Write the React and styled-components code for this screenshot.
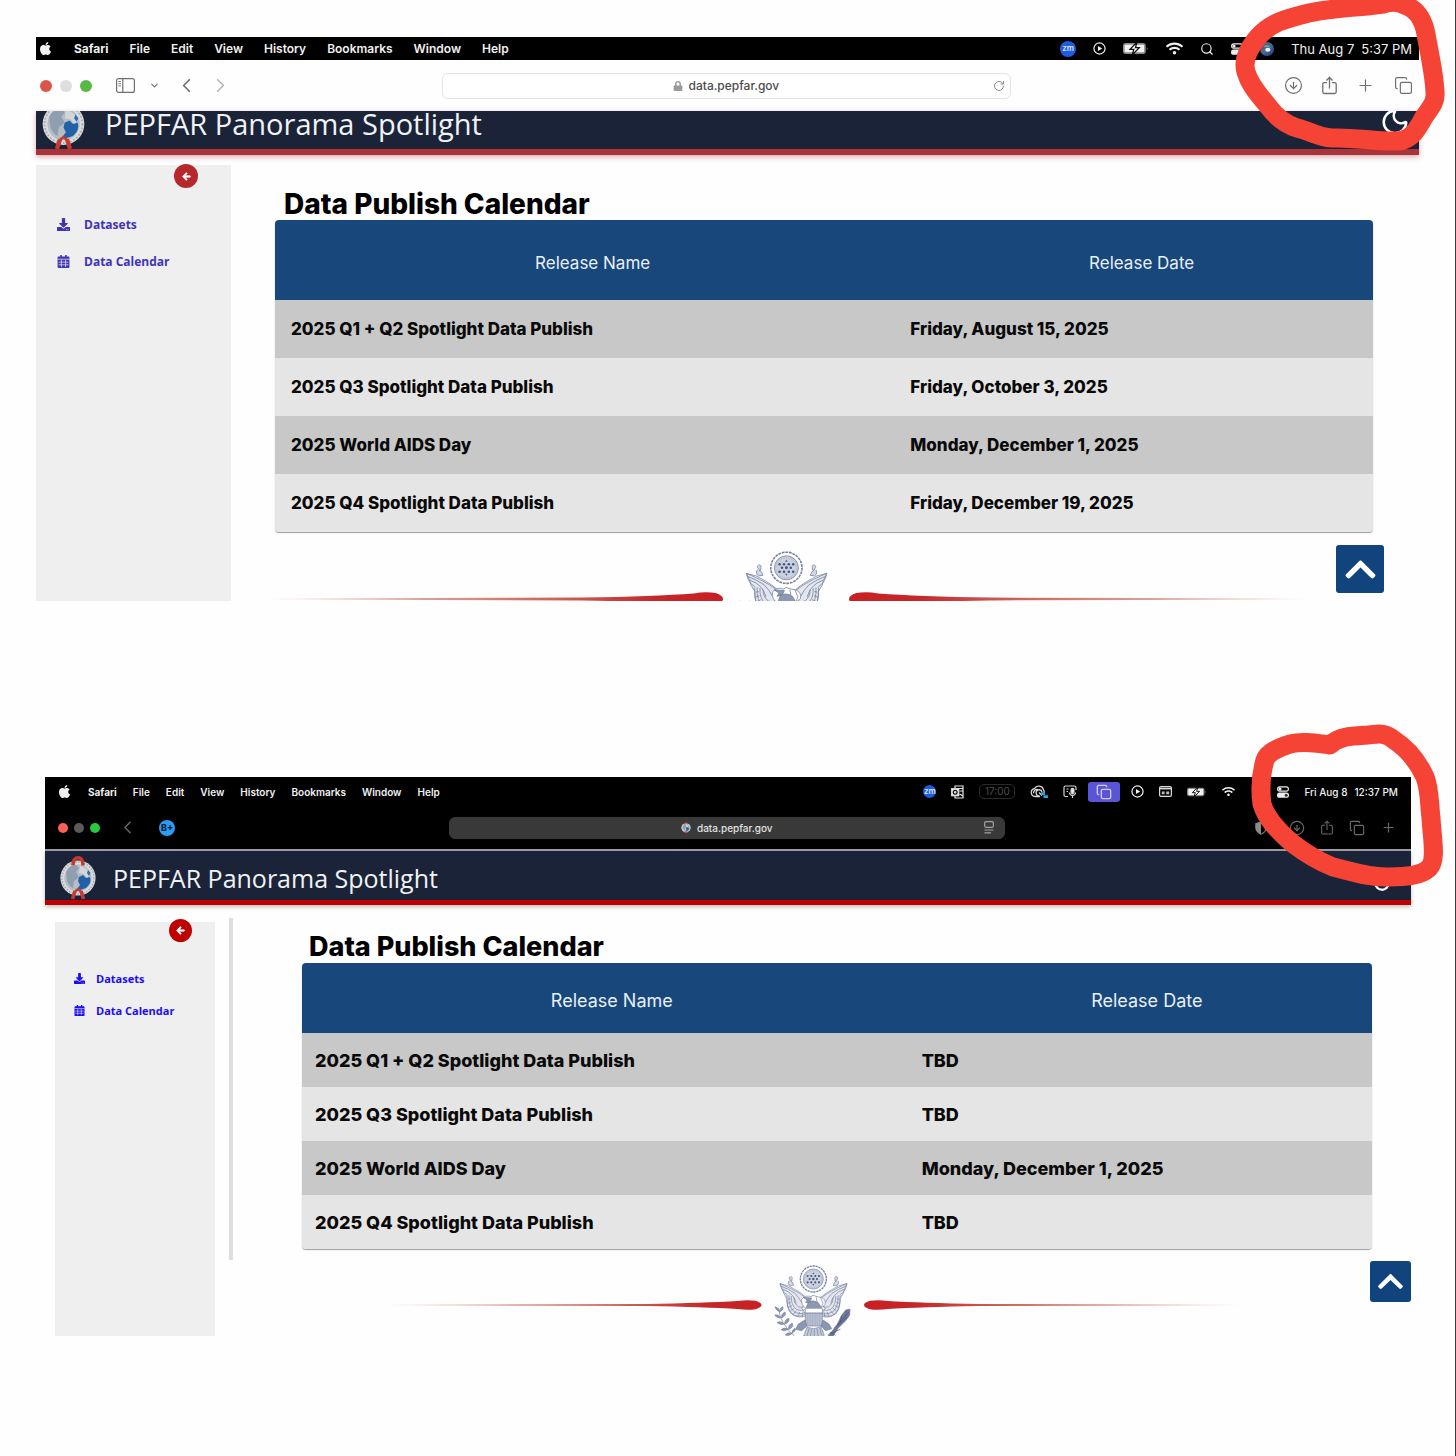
import React from "react";
import styled, { createGlobalStyle, css, ThemeProvider } from "styled-components";
import { FaApple, FaArrowLeft, FaChevronUp, FaDownload, FaLock, FaWifi } from "react-icons/fa";
import { ChevronDown, ChevronLeft, ChevronRight, CircleArrowDown, Copy, Moon, Plus, RotateCw, Search } from "lucide-react";

const menus = ["File", "Edit", "View", "History", "Bookmarks", "Window", "Help"];

const thursday = {
  menuHeight: 23,
  menuPadding: "0 7px 0 2px",
  menuFont: 12,
  clockFont: 13,
  clockWeight: 400,
  menuGap: 21,
  statusGap: 17,
  toolbarHeight: 51,
  toolbarBg: "#fefefe",
  toolbarLine: "none",
  toolbarPadding: "0 6px 0 4px",
  toolGap: 19,
  toolColor: "#6f6f6f",
  dot: 12,
  dotGap: 8,
  dots: ["#dd5548", "#dedede", "#58b944"],
  urlHeight: 26,
  urlBg: "#ffffff",
  urlBorder: "#e3e3e3",
  urlColor: "#4c4c4c",
  urlFont: 12,
  urlWidth: 92,
  actionRight: 5,
  bannerHeight: 38,
  bannerPadding: "0 9px 0 5px",
  bannerFont: 29,
  bannerGap: 19,
  bannerLine: "6px solid #a83338",
  bannerShadow: "0 2px 5px rgba(168, 51, 56, 0.4)",
  moonBottom: 12,
  sideWidth: 195,
  sideMargin: "10px 0 0 0",
  sidePadding: "41px 0 0 21px",
  sideFont: 12,
  sideGap: 14,
  sideRow: 37,
  sideColor: "#4034b6",
  collapse: 24,
  collapseRight: 33,
  collapseTop: -1,
  collapseBg: "#b5282c",
  contentPadding: "33px 46px 0 44px",
  titleFont: 28,
  titleIndent: 9,
  headHeight: 80,
  rowHeight: 58,
  nameColumn: "56.4%",
  cellIndent: 16,
  cellFont: 17,
  footerPadding: "0 112px 0 34px",
  footerTop: 19,
  footerHeight: 50,
  eagleGap: 15,
  lineHeight: 14,
  topSize: 48,
  topRight: 35,
  topBottom: 8,
};

const friday = {
  menuHeight: 29,
  menuPadding: "0 13px 0 12px",
  menuFont: 10,
  clockFont: 10,
  clockWeight: 500,
  menuGap: 16,
  statusGap: 15,
  toolbarHeight: 45,
  toolbarBg: "#000000",
  toolbarLine: "2px solid #9d9fa5",
  toolbarPadding: "0 15px 0 13px",
  toolGap: 16,
  toolColor: "#6a6a6a",
  dot: 10,
  dotGap: 6,
  dots: ["#fe5f57", "#5b5b5b", "#28c840"],
  urlHeight: 22,
  urlBg: "#393939",
  urlBorder: "#393939",
  urlColor: "#e2e2e2",
  urlFont: 10,
  urlWidth: 76,
  actionRight: 10,
  bannerHeight: 49,
  bannerPadding: "6px 20px 0 14px",
  bannerFont: 25,
  bannerGap: 16,
  bannerLine: "5px solid #bf0000",
  bannerShadow: "0 2px 4px rgba(0, 0, 0, 0.25)",
  moonBottom: 8,
  sideWidth: 160,
  sideMargin: "17px 0 0 10px",
  sidePadding: "40px 0 0 19px",
  sideFont: 11,
  sideGap: 11,
  sideRow: 32,
  sideColor: "#1a0df5",
  collapse: 23,
  collapseRight: 23,
  collapseTop: -3,
  collapseBg: "#bf0000",
  contentPadding: "26px 39px 0 69px",
  titleFont: 27,
  titleIndent: 7,
  headHeight: 70,
  rowHeight: 54,
  nameColumn: "56.7%",
  cellIndent: 13,
  cellFont: 18,
  footerPadding: "0 172px 0 153px",
  footerTop: 16,
  footerHeight: 71,
  eagleGap: 11,
  lineHeight: 10,
  topSize: 41,
  topRight: 0,
  topBottom: 34,
};

const thursdayReleases = [
  { name: "2025 Q1 + Q2 Spotlight Data Publish", date: "Friday, August 15, 2025" },
  { name: "2025 Q3 Spotlight Data Publish", date: "Friday, October 3, 2025" },
  { name: "2025 World AIDS Day", date: "Monday, December 1, 2025" },
  { name: "2025 Q4 Spotlight Data Publish", date: "Friday, December 19, 2025" },
];

const fridayReleases = [
  { name: "2025 Q1 + Q2 Spotlight Data Publish", date: "TBD" },
  { name: "2025 Q3 Spotlight Data Publish", date: "TBD" },
  { name: "2025 World AIDS Day", date: "Monday, December 1, 2025" },
  { name: "2025 Q4 Spotlight Data Publish", date: "TBD" },
];

const Battery = ({ width }) => (
  <svg width={width} height={width / 2} viewBox="0 0 24 12">
    <rect x="0" y="1" width="21" height="10" rx="2.5" fill="#8d8d8d" />
    <rect x="1.5" y="2.5" width="18" height="7" rx="1" fill="#f2f2f2" />
    <path d="M22 4.5 Q23.6 6 22 7.5 Z" fill="#8d8d8d" />
    <path d="M13 0 L6.5 6.8 H10 L8.5 12 L15 5.2 H11.5 Z" fill="#fff" stroke="#111" strokeWidth="1.2" />
  </svg>
);

const PlayCircle = ({ size }) => (
  <svg width={size} height={size} viewBox="0 0 14 14">
    <circle cx="7" cy="7" r="6" fill="none" stroke="#f0f0f0" strokeWidth="1.3" />
    <path d="M5.3 4.2 L10 7 L5.3 9.8 Z" fill="#f0f0f0" />
  </svg>
);

const ControlCenter = ({ size }) => (
  <svg width={size} height={size} viewBox="0 0 12 12">
    <rect x="0.6" y="0.9" width="10.8" height="4.2" rx="2.1" fill="none" stroke="#ededed" strokeWidth="1.1" />
    <circle cx="3" cy="3" r="1.6" fill="#ededed" />
    <rect x="0" y="6.6" width="12" height="5.2" rx="2.6" fill="#ededed" />
    <circle cx="9.2" cy="9.2" r="1.5" fill="#333" />
  </svg>
);

const Siri = () => (
  <svg width="14" height="14" viewBox="0 0 14 14">
    <defs>
      <linearGradient id="siri" x1="0" y1="0" x2="1" y2="1">
        <stop offset="0" stopColor="#a0385f" />
        <stop offset="0.5" stopColor="#3f6f93" />
        <stop offset="1" stopColor="#2b2f8a" />
      </linearGradient>
    </defs>
    <circle cx="7" cy="7" r="7" fill="url(#siri)" />
    <path d="M3 5 Q7 1 11 6 Q8 4 3 5 Z" fill="#4fc0a0" />
    <ellipse cx="7.8" cy="7.8" rx="2.6" ry="2" fill="#f3f6ff" />
  </svg>
);

const Outlook = () => (
  <svg width="13" height="14" viewBox="0 0 13 14" fill="none" stroke="#e6e6e6" strokeWidth="1.2">
    <path d="M4 3.5 V1 H12 V13 H4 V11" />
    <path d="M7 3.5 H12 M8.5 6 H12 M8.5 9 L12 11" />
    <rect x="0.7" y="3.7" width="7" height="7" fill="#e6e6e6" />
    <circle cx="4.2" cy="7.2" r="1.9" stroke="#111" />
  </svg>
);

const CreativeCloud = () => (
  <svg width="18" height="13" viewBox="0 0 18 13" fill="none" stroke="#d6d6d6" strokeWidth="1.3">
    <path d="M5 11.5 A4 4 0 0 1 4.4 3.6 A5 5 0 0 1 13.6 5 A3.4 3.4 0 0 1 14 8" />
    <path d="M5 11.5 H10 M12 7 A3 3 0 1 0 9.5 10.8 M9 7.5 L12 10.5 M8 4.6 A3.4 3.4 0 0 0 3.6 8.4" />
    <path d="M11 8.6 H15 M13.4 11.6 H18" stroke="#25a5dc" strokeWidth="2.6" />
  </svg>
);

const MicTile = () => (
  <svg width="14" height="14" viewBox="0 0 14 14" fill="none" stroke="#d6d6d6" strokeWidth="1.2">
    <path d="M5 11.5 H2.6 Q1 11.5 1 10 V2.5 Q1 1 2.6 1 H11.4 Q13 1 13 2.5 V5" />
    <path d="M3.5 4 H5.5 M3.5 6.5 H5" />
    <rect x="8" y="3.4" width="3" height="5.2" rx="1.5" fill="#e8e8e8" />
    <path d="M6.4 7.5 Q6.8 10.4 9.5 10.4 Q12.2 10.4 12.6 7.5 M9.5 10.4 V13" />
  </svg>
);

const WindowTile = () => (
  <svg width="13" height="11" viewBox="0 0 13 11">
    <rect x="0.6" y="0.6" width="11.8" height="9.8" rx="1.4" fill="none" stroke="#dcdcdc" strokeWidth="1.2" />
    <path d="M1 2.6 H12" stroke="#dcdcdc" strokeWidth="1.6" />
    <path d="M2.8 5.4 H5.6 V8.2 H2.8 Z M7.2 5.4 H10.2 V8.2 H7.2 Z" fill="#bdbdbd" />
  </svg>
);

const SidebarIcon = () => (
  <svg width="19" height="15" viewBox="0 0 19 15" fill="none" stroke="#707070">
    <rect x="0.6" y="0.6" width="17.8" height="13.8" rx="2" strokeWidth="1.2" />
    <path d="M6.8 1 V14" strokeWidth="1.2" />
    <path d="M2.4 3.5 H5 M2.4 5.7 H5 M2.4 7.9 H5" strokeWidth="0.9" />
  </svg>
);

const ShareIcon = ({ width, height }) => (
  <svg width={width} height={height} viewBox="0 0 15 18" fill="none" stroke="currentColor" strokeWidth="1.3">
    <path d="M5 6.2 H2.2 Q0.8 6.2 0.8 7.6 V15.6 Q0.8 17 2.2 17 H12.8 Q14.2 17 14.2 15.6 V7.6 Q14.2 6.2 12.8 6.2 H10" />
    <path d="M7.5 12 V1 M4.4 4 L7.5 1 L10.6 4" />
  </svg>
);

const ShieldIcon = () => (
  <svg width="18" height="14" viewBox="0 0 18 14">
    <path d="M6 0.8 L11.2 2.6 V7 Q11 11 6 13.2 Q1 11 0.8 7 V2.6 Z" fill="none" stroke="#777" strokeWidth="1.2" />
    <path d="M6 0.8 V13.2 Q1 11 0.8 7 V2.6 Z" fill="#8a8a8a" />
  </svg>
);

const ReaderIcon = () => (
  <svg width="10" height="13" viewBox="0 0 10 13" fill="none" stroke="#a2a2a2" strokeWidth="1.2">
    <rect x="0.7" y="0.7" width="8.6" height="5.6" rx="1.2" />
    <path d="M0.5 9 H9.5 M0.5 11.8 H7" />
  </svg>
);

const CalendarIcon = ({ size }) => (
  <svg width={size} height={size} viewBox="0 0 13 13">
    <path d="M3.2 0 H4.8 V1.6 H8.2 V0 H9.8 V1.6 H11.4 Q12.4 1.6 12.4 2.6 V12 Q12.4 13 11.4 13 H1.6 Q0.6 13 0.6 12 V2.6 Q0.6 1.6 1.6 1.6 H3.2 Z" fill="currentColor" />
    <path d="M0.6 4.2 H12.4 M1.6 7.2 H11.4 M1.6 9.8 H11.4 M4.4 4.6 V12 M8.6 4.6 V12" stroke="#efefef" strokeWidth="0.7" />
  </svg>
);

const Globe = ({ size }) => (
  <svg width={size} height={(size * 44) / 38} viewBox="0 0 38 44">
    <circle cx="19" cy="22" r="17.6" fill="#d9dadb" />
    <circle cx="19" cy="22" r="16" fill="none" stroke="#a4a7ad" strokeWidth="1.4" strokeDasharray="1.4 1.6" />
    <circle cx="19" cy="22" r="13.6" fill="#b4bcc6" />
    <path d="M14 9.5 Q14 1.8 19 1.8 Q24 1.8 24 9.5" fill="none" stroke="#c63a30" strokeWidth="3.6" />
    <path d="M7 16 Q10 9 17 9 L20 12 L17 16 L20 21 L15 25 L14 32 Q10 30 8 25 Z" fill="#8f9fb1" />
    <path d="M21 10 Q29 12 31 19 L28 22 L25 18 L20 17 Z" fill="#d3d6d9" />
    <path d="M20 21 L24 19 L27 22 L31 21 Q33 27 27 32 L21 34 L18 33 L21 29 L19 25 Z" fill="#2161a6" />
    <path d="M29 14 L31.5 17 L30 20 L28 17 Z" fill="#2e6fae" />
    <path d="M16 35 L13.5 43 M22 35 L24.5 43" stroke="#c63a30" strokeWidth="3.6" />
    <path d="M16 36 Q19 31 22 36" fill="none" stroke="#c63a30" strokeWidth="2.4" />
  </svg>
);

const Feathers = () => (
  <g>
    <path d="M181 131 Q190 134 214 146 Q240 158 262 176 L264 190 L246 204 L258 222 Q236 236 216 222 Q202 210 202 176 Q190 160 188 146 Z" fill="#e3e6ee" />
    <path d="M181 131 Q206 134 232 152 Q248 162 262 174 M185 139 Q206 146 226 160 Q238 172 246 188 M190 148 Q208 154 218 166 Q226 176 230 190" />
    <path d="M181 131 Q186 156 202 164 M202 166 Q198 204 218 222 Q236 236 258 228" />
    <path d="M208 166 Q206 200 224 216 Q240 226 258 218 M215 168 Q213 194 230 208 Q242 214 256 209 M223 172 Q222 190 236 200 Q244 204 254 200" />
    <path d="M205 178 L212 176 M204 190 L213 187 M206 202 L217 197 M212 213 L223 205 M221 223 L230 212 M235 229 L240 216 M248 231 L249 218" />
    <path d="M208 122 Q203 133 212 137 L222 136 Q220 127 214 123 M209 116 A4.5 4.5 0 1 1 217 117 Q219 124 214 124 Z" fill="#d3d7e2" />
  </g>
);

const Eagle = ({ size }) => (
  <svg width={size} height={size} viewBox="160 75 240 240" fill="none" stroke="#76819d" strokeWidth="2" strokeLinejoin="round">
    <Feathers />
    <g transform="translate(563 0) scale(-1 1)">
      <Feathers />
    </g>
    <circle cx="281" cy="117" r="39" fill="#fff" strokeWidth="4" strokeDasharray="7 2" />
    <circle cx="281" cy="117" r="30" fill="#cbd1df" />
    <circle cx="281" cy="117" r="26" stroke="#aeb6c9" strokeWidth="5" strokeDasharray="1.5 3" />
    <g fill="#46557f" stroke="none">
      <path d="M281 97 l3 5 h-6 Z M281 137 l3 -5 h-6 Z" />
      <circle cx="264" cy="108" r="3.2" /><circle cx="275" cy="108" r="3.2" />
      <circle cx="287" cy="108" r="3.2" /><circle cx="298" cy="108" r="3.2" />
      <circle cx="270" cy="117" r="3.2" /><circle cx="281" cy="117" r="3.6" /><circle cx="292" cy="117" r="3.2" />
      <circle cx="264" cy="127" r="3.2" /><circle cx="275" cy="127" r="3.2" />
      <circle cx="287" cy="127" r="3.2" /><circle cx="298" cy="127" r="3.2" />
    </g>
    <path d="M246 178 Q256 164 274 170 L280 166 L292 170 L304 172 Q320 178 316 194 L304 204 H258 Q244 196 246 178 Z" fill="#fff" />
    <path d="M250 172 L276 174 L270 186 L258 188 L262 180 Z M266 186 Q280 178 296 188 L304 202 H260 Z" fill="#8d98b3" />
    <path d="M302 172 L310 190 L304 202 M290 172 L292 186" />
    <path d="M257 205 H308 V219 H257 Z" fill="#fff" />
    <path d="M257 220 H308 V258 H257 Z" fill="#b9c1d1" />
    <path d="M264 222 V256 M271 222 V257 M278 222 V258 M286 222 V258 M293 222 V257 M300 222 V256" stroke="#9fa9be" />
    <path d="M256 240 L236 252 L228 268 L246 272 L262 258 Z M310 240 L328 252 L336 266 L318 272 L304 258 Z" fill="#8b96b2" />
    <path d="M262 262 L252 288 L268 292 H300 L314 286 L304 260 L283 266 Z" fill="#c2c9d8" />
    <path d="M268 266 L262 288 M276 268 L272 290 M284 268 V290 M292 266 L296 290 M300 264 L306 286" />
    <path d="M176 202 Q180 250 226 290" />
    <g fill="#8f9ab6">
      <path d="M178 214 q-10 -4 -12 -14 q10 2 12 14 Z M179 216 q2 -14 10 -16 q4 10 -10 16 Z" />
      <path d="M184 234 q-14 0 -19 -9 q12 -3 19 9 Z M185 234 q0 -14 11 -18 q5 11 -11 18 Z" />
      <path d="M194 252 q-14 4 -22 -5 q12 -6 22 5 Z M195 252 q0 -14 13 -17 q3 12 -13 17 Z" />
      <path d="M206 268 q-12 8 -22 1 q9 -9 22 -1 Z M207 268 q-2 -14 11 -18 q5 12 -11 18 Z" />
      <path d="M218 280 q-10 10 -21 5 q7 -10 21 -5 Z M218 279 q-2 -10 8 -14 q5 8 -8 14 Z" />
    </g>
    <path d="M326 288 L352 254 L366 226 L378 210 L391 207 L390 226 L378 242 L356 264 L338 292 Z" fill="#6b7898" />
    <path d="M352 256 L388 216 M344 264 L382 232 M366 226 L362 246 M330 276 L348 286 M324 284 L362 268" stroke="#46557f" />
  </svg>
);

const Rule = ({ id, flip }) => (
  <RuleSvg viewBox="0 0 376 10" preserveAspectRatio="none">
    <defs>
      <linearGradient id={id} x1="0" x2="1">
        <stop offset="0" stopColor="#c9604a" stopOpacity="0" />
        <stop offset="0.35" stopColor="#c4604c" stopOpacity="0.6" />
        <stop offset="0.85" stopColor="#c4282a" />
        <stop offset="1" stopColor="#c81f24" />
      </linearGradient>
    </defs>
    <path
      transform={flip ? "translate(376 0) scale(-1 1)" : undefined}
      d="M0 4.6 L260 4 Q320 3 352 1 Q362 -0.4 370 0.8 Q376 2.6 376 5 Q376 7.4 370 9.2 Q362 10.4 352 9 Q320 7 260 6 L0 5.4 Z"
      fill={`url(#${id})`}
    />
  </RuleSvg>
);

const MenuBar = ({ children, clock }) => (
  <MenuBarRow>
    <MenuGroup>
      <FaApple size={15} />
      <MenuButton $strong>Safari</MenuButton>
      {menus.map((name) => (
        <MenuButton key={name}>{name}</MenuButton>
      ))}
    </MenuGroup>
    <StatusGroup>
      {children}
      <Clock>
        <span>{clock[0]}</span>
        <span>{clock[1]}</span>
      </Clock>
    </StatusGroup>
  </MenuBarRow>
);

const Dots = ({ colors }) => (
  <DotGroup>
    {colors.map((color) => (
      <Dot key={color} $color={color} />
    ))}
  </DotGroup>
);

const Site = ({ id, releases, railed, sizes }) => (
  <>
    <Banner>
      <BannerInner>
        <Brand href="#home">
          <Globe size={sizes.logo} />
          PEPFAR Panorama Spotlight
        </Brand>
        <MoonButton aria-label="Dark mode">
          <Moon size={sizes.moon} strokeWidth={sizes.moonStroke} color="#fff" />
        </MoonButton>
      </BannerInner>
    </Banner>
    <Body>
      <Sidebar>
        <Collapse aria-label="Collapse menu">
          <FaArrowLeft size={9} />
        </Collapse>
        <SideLink href="#datasets">
          <FaDownload size={sizes.icon} />
          Datasets
        </SideLink>
        <SideLink href="#calendar">
          <CalendarIcon size={sizes.icon} />
          Data Calendar
        </SideLink>
      </Sidebar>
      {railed && <Rail />}
      <Main>
        <Content>
          <Title>Data Publish Calendar</Title>
          <Table>
            <thead>
              <tr>
                <Head $name>Release Name</Head>
                <Head>Release Date</Head>
              </tr>
            </thead>
            <tbody>
              {releases.map((release) => (
                <Row key={release.name}>
                  <Cell>{release.name}</Cell>
                  <Cell>{release.date}</Cell>
                </Row>
              ))}
            </tbody>
          </Table>
        </Content>
        <Footer>
          <Emblem>
            <Rule id={`${id}-left`} />
            <Eagle size={sizes.eagle} />
            <Rule id={`${id}-right`} flip />
          </Emblem>
        </Footer>
      </Main>
    </Body>
    <ToTop aria-label="Back to top">
      <FaChevronUp size={sizes.chevron} />
    </ToTop>
  </>
);

const App = () => {
  return (
    <Page>
      <GlobalStyle />
      <ThemeProvider theme={thursday}>
        <Shot>
          <MenuBar clock={["Thu Aug 7", "5:37 PM"]}>
            <ZoomBadge $size={16}>zm</ZoomBadge>
            <PlayCircle size={13} />
            <Battery width={26} />
            <FaWifi size={17} />
            <Search size={14} />
            <ControlCenter size={12} />
            <Siri />
          </MenuBar>
          <Toolbar>
            <ToolGroup>
              <Dots colors={thursday.dots} />
              <ToolCluster $space={24}>
                <IconButton aria-label="Sidebar"><SidebarIcon /></IconButton>
              </ToolCluster>
              <ToolCluster $space={14}>
                <IconButton aria-label="Tab groups"><ChevronDown size={11} strokeWidth={2.6} /></IconButton>
              </ToolCluster>
              <ToolCluster $space={15}>
                <IconButton aria-label="Back"><ChevronLeft size={23} strokeWidth={1.8} /></IconButton>
              </ToolCluster>
              <ToolCluster $space={11}>
                <IconButton aria-label="Forward"><ChevronRight size={23} strokeWidth={1.6} color="#b5b5b5" /></IconButton>
              </ToolCluster>
            </ToolGroup>
            <Address>
              <FaLock size={10} color="#9b9b9b" />
              <AddressInput aria-label="Address" defaultValue="data.pepfar.gov" />
              <AddressAction aria-label="Reload"><RotateCw size={12} color="#8b8b8b" /></AddressAction>
            </Address>
            <ToolGroup $end>
              <IconButton aria-label="Downloads"><CircleArrowDown size={19} strokeWidth={1.5} /></IconButton>
              <IconButton aria-label="Share"><ShareIcon width={15} height={19} /></IconButton>
              <IconButton aria-label="New tab"><Plus size={19} strokeWidth={1.5} /></IconButton>
              <IconButton aria-label="Tabs"><Copy size={19} strokeWidth={1.5} /></IconButton>
            </ToolGroup>
          </Toolbar>
          <Site
            id="thu"
            releases={thursdayReleases}
            sizes={{ logo: 45, moon: 30, moonStroke: 2, icon: 13, eagle: 96, chevron: 35 }}
          />
          <Scribble $top={-37} $right={-37} width="226" height="160" viewBox="1230 0 226 160">
            <path
              strokeWidth="19"
              d="M1383 4 C1355 8 1328 8 1305 14 C1285 19 1270 23 1258 37 C1247 50 1243 62 1246 72 C1250 86 1260 96 1268 106 C1276 117 1285 124 1297 128 C1310 131 1318 137 1332 138 C1356 137 1376 142 1398 141 C1412 140 1418 128 1424 117 C1431 107 1436 102 1435 92 C1434 72 1429 52 1426 34 C1423 18 1416 8 1402 4 C1396 1 1390 2 1383 4 Z"
            />
          </Scribble>
        </Shot>
      </ThemeProvider>
      <ThemeProvider theme={friday}>
        <Shot $inset>
          <MenuBar clock={["Fri Aug 8", "12:37 PM"]}>
            <ZoomBadge $size={13}>zm</ZoomBadge>
            <Outlook />
            <TimerPill>17:00</TimerPill>
            <CreativeCloud />
            <MicTile />
            <MirrorTile aria-label="Screen mirroring">
              <Copy size={16} strokeWidth={2} />
            </MirrorTile>
            <PlayCircle size={13} />
            <WindowTile />
            <Battery width={20} />
            <FaWifi size={13} />
            <MenuSlot />
            <ControlCenter size={12} />
          </MenuBar>
          <Toolbar>
            <ToolGroup>
              <Dots colors={friday.dots} />
              <ToolCluster $space={17}>
                <IconButton aria-label="Back"><ChevronLeft size={21} strokeWidth={1.7} /></IconButton>
              </ToolCluster>
              <ToolCluster $space={21}>
                <ProfileBadge>B+</ProfileBadge>
              </ToolCluster>
            </ToolGroup>
            <Address>
              <Globe size={10} />
              <AddressInput aria-label="Address" defaultValue="data.pepfar.gov" />
              <AddressAction aria-label="Reader"><ReaderIcon /></AddressAction>
            </Address>
            <ToolGroup $end>
              <IconButton aria-label="Privacy report"><ShieldIcon /></IconButton>
              <IconButton aria-label="Downloads"><CircleArrowDown size={16} strokeWidth={1.7} /></IconButton>
              <IconButton aria-label="Share"><ShareIcon width={12} height={15} /></IconButton>
              <IconButton aria-label="Tabs"><Copy size={16} strokeWidth={1.7} /></IconButton>
              <IconButton aria-label="New tab"><Plus size={15} strokeWidth={1.8} /></IconButton>
            </ToolGroup>
          </Toolbar>
          <Site
            id="fri"
            railed
            releases={fridayReleases}
            sizes={{ logo: 38, moon: 18, moonStroke: 3, icon: 11, eagle: 80, chevron: 29 }}
          />
          <Scribble $top={-62} $right={-45} width="216" height="190" viewBox="1240 715 216 190">
            <path
              strokeWidth="19"
              d="M1330 745 C1314 743 1302 741 1290 744 C1278 748 1268 752 1265 760 C1261 774 1260 790 1262 804 C1266 818 1277 830 1292 843 C1305 853 1318 861 1333 867 C1350 871 1370 878 1389 877 C1405 877 1421 876 1429 868 C1437 860 1432 838 1431 818 C1429 802 1430 790 1425 777 C1418 762 1408 749 1394 740 C1385 732 1378 734 1368 735 C1352 736 1340 736 1330 745 Z"
            />
          </Scribble>
        </Shot>
      </ThemeProvider>
    </Page>
  );
};

const GlobalStyle = createGlobalStyle`
  * {
    box-sizing: border-box;
  }
  body {
    margin: 0;
    background: #fefefe;
    font-family: Inter, "Liberation Sans", sans-serif;
  }
  button {
    border: 0;
    padding: 0;
    background: none;
    color: inherit;
    font: inherit;
  }
  svg {
    display: block;
    flex-shrink: 0;
  }
`;

const Page = styled.main`
  display: flex;
  flex-direction: column;
  gap: 176px;
  min-height: 100vh;
  padding: 37px 36px 119px;
  border-right: 1px solid #3c3c3c;
  overflow: hidden;
`;

const Shot = styled.section`
  position: relative;
  margin: ${({ $inset }) => ($inset ? "0 8px 0 9px" : "0")};
`;

const MenuBarRow = styled.div`
  display: flex;
  align-items: center;
  justify-content: space-between;
  height: ${({ theme }) => theme.menuHeight}px;
  padding: ${({ theme }) => theme.menuPadding};
  background: #000;
  color: #f0f0f0;
  font-size: ${({ theme }) => theme.menuFont}px;
`;

const MenuGroup = styled.nav`
  display: flex;
  align-items: center;
  gap: ${({ theme }) => theme.menuGap}px;
`;

const MenuButton = styled.button`
  font-weight: ${({ $strong }) => ($strong ? 700 : 600)};
`;

const StatusGroup = styled.div`
  display: flex;
  align-items: center;
  gap: ${({ theme }) => theme.statusGap}px;
`;

const Clock = styled.time`
  display: flex;
  gap: 7px;
  font-size: ${({ theme }) => theme.clockFont}px;
  font-weight: ${({ theme }) => theme.clockWeight};
  white-space: nowrap;
`;

const ZoomBadge = styled.span`
  width: ${({ $size }) => $size}px;
  height: ${({ $size }) => $size}px;
  border-radius: 50%;
  background: #1f5be0;
  color: #dfe8ff;
  font-size: 8px;
  font-weight: 600;
  line-height: ${({ $size }) => $size - 1}px;
  text-align: center;
`;

const TimerPill = styled.span`
  width: 36px;
  border: 1px solid #2b2b2b;
  border-radius: 5px;
  color: #4d4d4d;
  font-size: 10px;
  line-height: 13px;
  text-align: center;
`;

const MirrorTile = styled.button`
  display: grid;
  place-items: center;
  width: 32px;
  height: 20px;
  margin: 0 -4px;
  border-radius: 3px;
  background: #5a55d6;
  color: #cfcdf7;
`;

const MenuSlot = styled.span`
  width: 12px;
`;

const Toolbar = styled.div`
  display: grid;
  grid-template-columns: 1fr 41.5% 1fr;
  align-items: center;
  height: ${({ theme }) => theme.toolbarHeight}px;
  padding: ${({ theme }) => theme.toolbarPadding};
  border-bottom: ${({ theme }) => theme.toolbarLine};
  background: ${({ theme }) => theme.toolbarBg};
  color: ${({ theme }) => theme.toolColor};
`;

const ToolGroup = styled.div`
  display: flex;
  align-items: center;
  ${({ $end, theme }) =>
    $end &&
    css`
      justify-content: flex-end;
      gap: ${theme.toolGap}px;
    `}
`;

const ToolCluster = styled.div`
  margin-left: ${({ $space }) => $space}px;
`;

const DotGroup = styled.div`
  display: flex;
  gap: ${({ theme }) => theme.dotGap}px;
`;

const Dot = styled.span`
  width: ${({ theme }) => theme.dot}px;
  height: ${({ theme }) => theme.dot}px;
  border-radius: 50%;
  background: ${({ $color }) => $color};
`;

const IconButton = styled.button`
  display: grid;
  place-items: center;
`;

const ProfileBadge = styled.button`
  display: block;
  width: 16px;
  height: 16px;
  border-radius: 50%;
  background: #2a9cf3;
  color: #06233d;
  font-size: 9px;
  font-weight: 800;
  line-height: 16px;
  text-align: center;
`;

const Address = styled.div`
  position: relative;
  display: flex;
  align-items: center;
  justify-content: center;
  gap: 6px;
  height: ${({ theme }) => theme.urlHeight}px;
  border: 1px solid ${({ theme }) => theme.urlBorder};
  border-radius: 6px;
  background: ${({ theme }) => theme.urlBg};
`;

const AddressInput = styled.input`
  width: ${({ theme }) => theme.urlWidth}px;
  padding: 0;
  border: 0;
  outline: 0;
  background: none;
  color: ${({ theme }) => theme.urlColor};
  font-family: inherit;
  font-size: ${({ theme }) => theme.urlFont}px;
  font-weight: 500;
`;

const AddressAction = styled.button`
  position: absolute;
  right: ${({ theme }) => theme.actionRight}px;
`;

const Banner = styled.header`
  display: flex;
  align-items: flex-end;
  height: ${({ theme }) => theme.bannerHeight}px;
  box-sizing: content-box;
  border-bottom: ${({ theme }) => theme.bannerLine};
  background: #1a2337;
  box-shadow: ${({ theme }) => theme.bannerShadow};
  overflow: hidden;
`;

const BannerInner = styled.div`
  display: flex;
  flex: 1;
  align-items: center;
  justify-content: space-between;
  height: 50px;
  padding: ${({ theme }) => theme.bannerPadding};
`;

const Brand = styled.a`
  display: flex;
  align-items: center;
  gap: ${({ theme }) => theme.bannerGap}px;
  color: #f1f2f5;
  font-family: "Open Sans", sans-serif;
  font-size: ${({ theme }) => theme.bannerFont}px;
  line-height: 40px;
  text-decoration: none;
`;

const MoonButton = styled.button`
  align-self: flex-end;
  padding-bottom: ${({ theme }) => theme.moonBottom}px;
`;

const Body = styled.div`
  display: flex;
`;

const Sidebar = styled.aside`
  position: relative;
  flex: none;
  width: ${({ theme }) => theme.sideWidth}px;
  margin: ${({ theme }) => theme.sideMargin};
  padding: ${({ theme }) => theme.sidePadding};
  background: #efefef;
`;

const Collapse = styled.button`
  position: absolute;
  top: ${({ theme }) => theme.collapseTop}px;
  right: ${({ theme }) => theme.collapseRight}px;
  display: grid;
  place-items: center;
  width: ${({ theme }) => theme.collapse}px;
  height: ${({ theme }) => theme.collapse}px;
  border-radius: 50%;
  background: ${({ theme }) => theme.collapseBg};
  color: #fff;

  svg {
    stroke: #fff;
    stroke-width: 40px;
  }
`;

const SideLink = styled.a`
  display: flex;
  align-items: center;
  gap: ${({ theme }) => theme.sideGap}px;
  height: ${({ theme }) => theme.sideRow}px;
  color: ${({ theme }) => theme.sideColor};
  font-family: "Open Sans", sans-serif;
  font-size: ${({ theme }) => theme.sideFont}px;
  font-weight: 700;
  text-decoration: none;
`;

const Rail = styled.div`
  flex: none;
  width: 4px;
  height: 342px;
  margin: 13px 0 0 14px;
  background: #dedede;
`;

const Main = styled.div`
  flex: 1;
  min-width: 0;
`;

const Content = styled.div`
  padding: ${({ theme }) => theme.contentPadding};
`;

const Title = styled.h1`
  margin: 0;
  padding-left: ${({ theme }) => theme.titleIndent}px;
  color: #000;
  font-size: ${({ theme }) => theme.titleFont}px;
  font-weight: 800;
  line-height: 32px;
`;

const Table = styled.table`
  width: 100%;
  border-collapse: collapse;
  border-radius: 4px;
  box-shadow: 0 1px 1px #9c9c9c;
  font-size: ${({ theme }) => theme.cellFont}px;
  overflow: hidden;
`;

const Head = styled.th`
  width: ${({ $name, theme }) => ($name ? theme.nameColumn : "auto")};
  height: ${({ theme }) => theme.headHeight}px;
  padding: 5px 0 0 ${({ theme }) => theme.cellIndent}px;
  background: #18477c;
  color: #e8f0f8;
  font-weight: 400;
  text-align: center;
`;

const Row = styled.tr`
  background: #e5e5e5;

  &:nth-child(odd) {
    background: #c8c8c8;
  }
`;

const Cell = styled.td`
  height: ${({ theme }) => theme.rowHeight}px;
  padding: 0 0 0 ${({ theme }) => theme.cellIndent}px;
  color: #0a0a0a;
  font-weight: 800;
`;

const Footer = styled.footer`
  height: ${({ theme }) => theme.footerHeight}px;
  margin-top: ${({ theme }) => theme.footerTop}px;
  padding: ${({ theme }) => theme.footerPadding};
  overflow: hidden;
`;

const Emblem = styled.div`
  display: flex;
  align-items: center;
  gap: ${({ theme }) => theme.eagleGap}px;
`;

const RuleSvg = styled.svg`
  flex: 1;
  min-width: 0;
  height: ${({ theme }) => theme.lineHeight}px;
`;

const ToTop = styled.button`
  position: absolute;
  right: ${({ theme }) => theme.topRight}px;
  bottom: ${({ theme }) => theme.topBottom}px;
  display: grid;
  place-items: center;
  width: ${({ theme }) => theme.topSize}px;
  height: ${({ theme }) => theme.topSize}px;
  border-radius: 3px;
  background: #11437d;
  color: #fff;
`;

const Scribble = styled.svg`
  position: absolute;
  top: ${({ $top }) => $top}px;
  right: ${({ $right }) => $right}px;
  fill: none;
  stroke: #f54336;
  stroke-linejoin: round;
  pointer-events: none;
`;

export default App;
